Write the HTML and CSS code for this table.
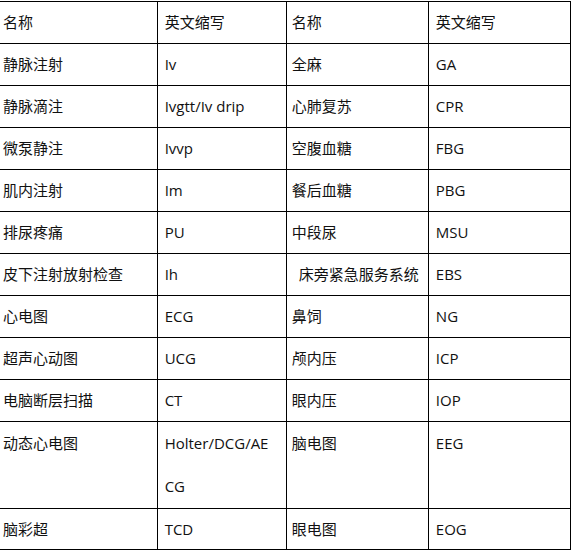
FILE: index.html
```html
<!DOCTYPE html>
<html lang="zh-CN">
<head>
<meta charset="utf-8">
<title>医学缩写</title>
<link rel="stylesheet" href="styles.css">
</head>
<body>
<table class="abbr">
  <colgroup>
    <col class="c1"><col class="c2"><col class="c3"><col class="c4">
  </colgroup>
  <tr><td>名称</td><td>英文缩写</td><td>名称</td><td>英文缩写</td></tr>
  <tr><td>静脉注射</td><td>Iv</td><td>全麻</td><td>GA</td></tr>
  <tr><td>静脉滴注</td><td>Ivgtt/Iv drip</td><td>心肺复苏</td><td>CPR</td></tr>
  <tr><td>微泵静注</td><td>Ivvp</td><td>空腹血糖</td><td>FBG</td></tr>
  <tr><td>肌内注射</td><td>Im</td><td>餐后血糖</td><td>PBG</td></tr>
  <tr><td>排尿疼痛</td><td>PU</td><td>中段尿</td><td>MSU</td></tr>
  <tr><td>皮下注射放射检查</td><td>Ih</td><td class="indent">床旁紧急服务系统</td><td>EBS</td></tr>
  <tr><td>心电图</td><td>ECG</td><td>鼻饲</td><td>NG</td></tr>
  <tr><td>超声心动图</td><td>UCG</td><td>颅内压</td><td>ICP</td></tr>
  <tr><td>电脑断层扫描</td><td>CT</td><td>眼内压</td><td>IOP</td></tr>
  <tr class="tall"><td>动态心电图</td><td>Holter/DCG/AE<br>CG</td><td>脑电图</td><td>EEG</td></tr>
  <tr class="last"><td>脑彩超</td><td>TCD</td><td>眼电图</td><td>EOG</td></tr>
</table>
</body>
</html>
```

FILE: styles.css
```css
html, body {
  margin: 0;
  padding: 0;
  background: #ffffff;
}

body {
  padding-top: 1px;
  font-family: "Open Sans", "Noto Sans CJK SC", sans-serif;
  font-size: 15px;
  color: #111111;
}

.abbr {
  border-collapse: collapse;
  table-layout: fixed;
  width: 571px;
}

.c1 { width: 157px; }
.c2 { width: 129px; }
.c3 { width: 142px; }
.c4 { width: 142px; }

.abbr td {
  border: 1px solid #000;
  height: 41px;
  padding: 0 0 0 7px;
  line-height: 41px;
  vertical-align: top;
  white-space: nowrap;
  overflow: hidden;
}

.abbr td:first-child {
  border-left: none;
  padding-left: 3px;
}

.abbr td:nth-child(3) {
  padding-left: 5px;
}

.abbr td.indent {
  padding-left: 12px;
}

.abbr .tall td {
  height: 84px;
  line-height: 43px;
}

.abbr .last td {
  height: 40px;
  line-height: 40px;
}
```
